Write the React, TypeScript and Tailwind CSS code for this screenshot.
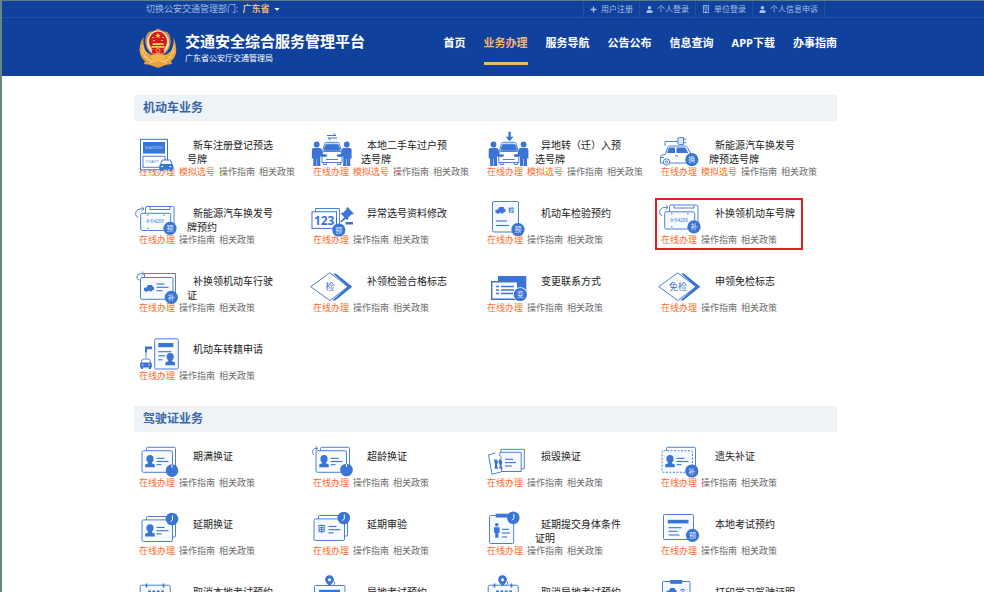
import type React from "react";
import { FaCaretDown, FaPlus, FaUser } from "react-icons/fa";
import { FaRegBuilding } from "react-icons/fa6";

const BLUE = "#3a74d4";
const LINE = "#4b80d8";
const PALE = "#f7fafe";

interface Service {
  name: string;
  icon: React.ReactNode;
  simulate?: boolean;
  highlight?: boolean;
}

interface Section {
  title: string;
  services: Service[];
}

function Icon({ children }: { children: React.ReactNode }) {
  return (
    <svg
      viewBox="0 0 48 36"
      className="relative h-9 w-12 shrink-0 overflow-visible"
      fill="none"
      stroke={LINE}
      strokeWidth="1"
      aria-hidden="true"
    >
      {children}
    </svg>
  );
}

function Label({
  x,
  y,
  size,
  color = BLUE,
  bold = true,
  children,
}: {
  x: number;
  y: number;
  size: number;
  color?: string;
  bold?: boolean;
  children: React.ReactNode;
}) {
  return (
    <text
      x={x}
      y={y + size * 0.37}
      fontSize={size}
      fontWeight={bold ? 700 : 400}
      fill={color}
      stroke="none"
      textAnchor="middle"
    >
      {children}
    </text>
  );
}

function Badge({ x, y, text }: { x: number; y: number; text: string }) {
  return (
    <g>
      <circle cx={x} cy={y} r="6.6" fill={BLUE} stroke="none" />
      <Label x={x} y={y} size={7} color="#e6effc" bold={false}>
        {text}
      </Label>
    </g>
  );
}

function Clock({ x, y, low }: { x: number; y: number; low?: boolean }) {
  return (
    <g>
      <circle cx={x} cy={y} r="6.3" fill={BLUE} stroke="none" />
      <path
        d={low ? `M${x} ${y - 6}v3` : `M${x + 0.5} ${y - 3.5}v4.5l-2 1.5`}
        stroke="#fff"
      />
    </g>
  );
}

function Person({ x, y }: { x: number; y: number }) {
  return (
    <g transform={`translate(${x} ${y})`} fill={BLUE} stroke="none">
      <ellipse cx="0" cy="-2.2" rx="3.6" ry="3.8" />
      <path d="M-2 0h4v2.2l2.8 1.200v2.800h-9.600v-2.800l2.800-1.200z" />
    </g>
  );
}

function Lines({ x, rows }: { x: number; rows: [number, number][] }) {
  return (
    <g stroke={BLUE} strokeWidth="1.1">
      {rows.map(([y, w]) => (
        <path key={y} d={`M${x} ${y}h${w}`} />
      ))}
    </g>
  );
}

function SmallCar({ x, y }: { x: number; y: number }) {
  return (
    <g transform={`translate(${x} ${y})`}>
      <path d="M1.200 5 2.400 1Q2.700 0 3.700 0h6.600q1 0 1.300 1l1.200 4z" fill="#fff" stroke={BLUE} />
      <path
        d="M0 6q0-2 2-2h10q2 0 2 2v3.500h-1.200V11h-2.400V9.500H3.600V11H1.200V9.500H0z"
        fill={BLUE}
        stroke="none"
      />
      <path d="M2 6.600h2M10 6.600h2" stroke="#fff" />
    </g>
  );
}

function SideCar({ x, y }: { x: number; y: number }) {
  return (
    <path
      transform={`translate(${x} ${y})`}
      d="M-5 0h2.2L-1-2.6h4.4V-1H5v3.2H3.4A1.6 1.6 0 0 1 .4 3H-1a1.7 1.7 0 0 1-3.2 0H-5z"
      fill={BLUE}
      stroke="none"
    />
  );
}

function FrontCar() {
  return (
    <g stroke={LINE}>
      <path d="m9.5 21.500 2.200-8q.4-1.200 1.600-1.200h11.400q1.200 0 1.600 1.200l2.200 8" fill="#fff" />
      <path d="m11 20.300 1.600-5.200q.3-.9 1.100-.9h10.600q.8 0 1.100.9l1.600 5.200z" fill={BLUE} />
      <path d="M9 23.500q0-2 2-2h16q2 0 2 2v9H9z" fill="#fff" />
      <path d="M10.500 24.500h4l-1 2.200h-3zM27.500 24.500h-4l1 2.200h3z" fill={BLUE} stroke="none" />
      <path d="M13 29.500h12M10.500 32.500v2h3v-2M24.500 32.500v2h3v-2" />
    </g>
  );
}

function Guard({ x, flip }: { x: number; flip?: boolean }) {
  return (
    <g
      transform={`translate(${x} 0)${flip ? " scale(-1 1)" : ""}`}
      fill={BLUE}
      stroke="none"
    >
      <circle cx="0" cy="14.5" r="2.9" />
      <path d="M-4.800 20q0-2 2-2h5.800q1.800 0 2.200 2l.6 4 2.600.8v2H4.200L3.600 26v10H.400V29h-.5v7h-3.300V28.500h-1.400z" />
    </g>
  );
}

function TransferIcon({ inbound }: { inbound?: boolean }) {
  return (
    <Icon>
      <g transform={inbound ? "translate(2.8 0)" : undefined}>
        <FrontCar />
        <Guard x={3.7} />
        <Guard x={33.8} flip />
        {inbound ? (
          <path d="M18.6 1.8h2.4v5h2.8l-4 4.400-4-4.400h2.8z" fill={BLUE} stroke="none" />
        ) : (
          <path d="M14 5.500h9l-2.500-2M24 8h-9l2.500 2" stroke={BLUE} />
        )}
      </g>
    </Icon>
  );
}

function PlateIcon({ badge, dx = 0, dy = 0 }: { badge: string; dx?: number; dy?: number }) {
  return (
    <Icon>
      <g transform={`translate(${dx} ${dy})`}>
        <rect x="6.5" y="8.5" width="28.5" height="20" rx="1.5" fill="#fff" />
        <path d="M11 8.5v3h20v-3" />
        <rect x="1.7" y="15.3" width="30" height="17.2" rx="1.5" fill={PALE} />
        <Label x={16} y={23.5} size={4.5} bold={false}>
          A•04288
        </Label>
        <path d="M8 17.2h1.5M24 17.2h1.5M8 30.4h1.5M24 30.4h1.5" />
        <path d="M5 10.8H2q-5 .6-5.500 5 0 2.600 2.800 3.600M2.600 8.600 5 10.800 2.600 13" />
        <Badge x={31} y={30.3} text={badge} />
      </g>
    </Icon>
  );
}

function DiamondIcon({ text }: { text: string }) {
  return (
    <Icon>
      <path d="M-2.3 20.7 16.8 6.8 35 20.7 16.8 34.5z" fill="#fff" />
      <path
        d="M20 7.5h2.800L39.300 20.700 22.200 34.500h-3L34.500 20.700z"
        fill={BLUE}
        stroke="none"
      />
      <Label x={17} y={20.4} size={9} bold={false}>
        {text}
      </Label>
    </Icon>
  );
}

function CardIcon({
  top = 6.3,
  dashed,
  arrow,
  x = 3,
  mark,
  children,
}: {
  top?: number;
  dashed?: boolean;
  arrow?: boolean;
  x?: number;
  mark?: string;
  children?: React.ReactNode;
}) {
  return (
    <Icon>
      <g transform={`translate(${x} ${top})`}>
        <rect x="4.5" y="0" width="29" height="20.5" rx="1" fill="#fff" />
        <rect
          x="0"
          y="3.4"
          width="30.5"
          height="21.6"
          rx="1.5"
          fill={PALE}
          strokeDasharray={dashed ? "2 1.5" : undefined}
        />
        {mark ? (
          <Label x={7.5} y={14} size={8}>
            {mark}
          </Label>
        ) : (
          <Person x={8} y={13.8} />
        )}
        <Lines x={14.5} rows={[[11, 8], [14.2, 12], [17.4, 5]]} />
        {arrow && <path d="M-2.400 7.500Q-5 3.500-1.500 1.400l3-.4M-.8-1.200 1.600 1-.4 3.400" />}
      </g>
      {children}
    </Icon>
  );
}

function Pin({ x }: { x: number }) {
  return (
    <g stroke="none">
      <path
        d={`M${x} 9.2q-4.4-4-4.4-6.6a4.4 4.4 0 0 1 8.8 0Q${x + 4.4} 5.2 ${x} 9.2z`}
        fill={BLUE}
      />
      <circle cx={x} cy="2.8" r="1.5" fill="#fff" />
      <path d={`M${x + 5} 4.5q1 2.2-1.6 4`} stroke={LINE} />
    </g>
  );
}

function CalendarIcon({ pin }: { pin?: boolean }) {
  return (
    <Icon>
      <rect x="1.2" y="8.2" width="30" height="25" rx="1.5" fill={PALE} />
      <path d="M7.5 6.5v4M24.5 6.5v4" stroke={BLUE} strokeWidth="1.6" />
      <path d="M9 14.8h16M9 20.8h16" stroke={BLUE} strokeWidth="2.6" strokeDasharray="2.8 1.6" />
      {pin && <Pin x={15.5} />}
    </Icon>
  );
}

const sections: Section[] = [
  {
    title: "机动车业务",
    services: [
      {
        name: "新车注册登记预选号牌",
        simulate: true,
        icon: (
          <Icon>
            <rect x="1.5" y="9.3" width="27" height="30.5" fill="#fff" stroke={BLUE} />
            <rect x="4" y="12" width="22" height="11.5" fill={BLUE} stroke="none" />
            <Label x={15} y={17.6} size={4} color="#bcd3f7" bold={false}>
              B·A00000
            </Label>
            <rect x="4" y="26.3" width="22" height="11" />
            <Label x={13} y={32} size={4} bold={false}>
              Y·0A77
            </Label>
            <SmallCar x={20.3} y={30} />
          </Icon>
        ),
      },
      { name: "本地二手车过户预选号牌", simulate: true, icon: <TransferIcon /> },
      { name: "异地转（迁）入预选号牌", simulate: true, icon: <TransferIcon inbound /> },
      {
        name: "新能源汽车换发号牌预选号牌",
        simulate: true,
        icon: (
          <Icon>
            <path d="M4 16v-4.5h12.5" />
            <path d="M16.8 9q0-1.5 1.5-1.5h4.2v7h-4.2q-1.5 0-1.5-1.5zM22.5 9.2h2.8M22.5 12.6h2.8" fill="#dbe7fa" />
            <path
              d="M-.6 33V27q.2-1.600 1.600-2l3.400-.6 2-6.600q.5-1.800 2.200-1.800h15.400q1.600 0 2.400 1.600L30 24v9z"
              fill="#fff"
            />
            <path d="m6 23 1.500-4.700q.3-.8 1.200-.8h5.300V23zM15.500 17.500h8q.9 0 1.300.8l2.400 4.700H15.500z" fill={BLUE} stroke="none" />
            <circle cx="5.500" cy="32" r="3.200" fill="#fff" />
            <circle cx="5.500" cy="32" r="1.200" />
            <path d="M-.6 27.500h3.500M14 26h3" />
            <Badge x={30.8} y={29.7} text="换" />
          </Icon>
        ),
      },
      { name: "新能源汽车换发号牌预约", icon: <PlateIcon badge="预" /> },
      {
        name: "异常选号资料修改",
        icon: (
          <Icon>
            <path d="M2.5 14v-3.5h24V27h-3" />
            <rect x="-1" y="13.8" width="24.5" height="16.6" fill="#fff" stroke={BLUE} />
            <Label x={11.2} y={22.3} size={12}>
              123
            </Label>
            <g fill={BLUE} stroke="none">
              <path d="m34.500 9 6.200 6.400-1.300 1.200-1-.2-3.300 3.300.2 1.200-1.300 1.200-6.200-6.400 1.300-1.200 1.100.2 3.200-3.200-.1-1.200z" />
              <path d="m32.200 18.500 1.500 1.400-5.400 4.600-1-1.100zM32.500 24h7.500v2.400h-7.500z" />
            </g>
            <Badge x={25.8} y={32} text="预" />
          </Icon>
        ),
      },
      {
        name: "机动车检验预约",
        icon: (
          <Icon>
            <rect x="5.5" y="3.5" width="26" height="30.5" rx="1.5" fill={PALE} />
            <SideCar x={13.5} y={11.7} />
            <Label x={24.3} y={11.7} size={6}>
              检
            </Label>
            <Lines x={9} rows={[[23, 11], [27.5, 13]]} />
            <Badge x={31} y={31.5} text="预" />
          </Icon>
        ),
      },
      {
        name: "补换领机动车号牌",
        highlight: true,
        icon: <PlateIcon badge="补" dx={2} dy={-1.5} />,
      },
      {
        name: "补换领机动车行驶证",
        icon: (
          <Icon>
            <path d="M5.5 11.5v-4h31V28" />
            <rect x="1.5" y="11.5" width="32.5" height="21.8" rx="1.5" fill={PALE} />
            <path d="M4.500 7.600H1.800Q-2 8-2.200 11q0 2.600 2.600 3.200M3 5.500l2 2.100-2 2.200" />
            <SideCar x={10} y={21.7} />
            <Lines x={17.5} rows={[[18, 8], [21.3, 12], [24.7, 6]]} />
            <Badge x={32.3} y={31.3} text="补" />
          </Icon>
        ),
      },
      { name: "补领检验合格标志", icon: <DiamondIcon text="检" /> },
      {
        name: "变更联系方式",
        icon: (
          <Icon>
            <rect x="11" y="10" width="28.3" height="22" rx="1" fill={BLUE} stroke="none" />
            <path d="M4.7 15.700h26v17.600h-26z" fill="#fff" stroke={BLUE} strokeWidth="1.4" />
            <path d="M9 20.500h3M9 24h3M9 27.500h3M14 20.500h13M14 24h13M14 27.500h13" stroke={BLUE} strokeWidth="1.4" />
            <circle cx="33.3" cy="28.5" r="7.3" fill="#fff" stroke="none" />
            <Badge x={33.3} y={28.5} text="变" />
          </Icon>
        ),
      },
      { name: "申领免检标志", icon: <DiamondIcon text="免检" /> },
      {
        name: "机动车转籍申请",
        icon: (
          <Icon>
            <rect x="15.7" y="4.8" width="23.6" height="30.2" rx="1.5" fill={PALE} />
            <rect x="19.3" y="9" width="15" height="4.2" fill={BLUE} stroke="none" />
            <Lines x={19.3} rows={[[17.7, 13], [21.8, 7], [25.8, 4]]} />
            <Person x={31.2} y={25} />
            <path d="M7 23.5v-10h6" />
            <path d="M6 12.500h7v2.800H8v3H6z" fill={BLUE} stroke="none" />
            <g transform="translate(1 25) scale(.85 .9)">
              <SmallCar x={0} y={0} />
            </g>
          </Icon>
        ),
      },
    ],
  },
  {
    title: "驾驶证业务",
    services: [
      { name: "期满换证", icon: <CardIcon><Clock x={33} y={29.6} low /></CardIcon> },
      { name: "超龄换证", icon: <CardIcon arrow><Clock x={33.5} y={29} low /></CardIcon> },
      {
        name: "损毁换证",
        icon: (
          <Icon>
            <path d="M14 11V8.3h23.3v19.5h-3" />
            <path d="M8.500 12 1.500 13.800 5 33.200l9-2.200" fill="#fff" />
            <path d="M13 11.300h21.200v19.200H14l1-3-2-2.500 1.800-3-2-2.600 1.600-3.200-2-2.400z" fill={PALE} />
            <path d="M7 18.500h3l1 3-1 2 1 4.300H7.600l.4-3.800zM12 18.500l2.500.5.8 3-1 2.200 1.200 3.500h-3.200l.6-3.500-1.400-2.600z" fill={BLUE} stroke="none" />
            <Lines x={18} rows={[[18.3, 8], [21.6, 11], [25, 7]]} />
          </Icon>
        ),
      },
      { name: "遗失补证", icon: <CardIcon x={1} dashed><Badge x={30.8} y={30} text="补" /></CardIcon> },
      { name: "延期换证", icon: <CardIcon top={7.5}><Clock x={33} y={10} /></CardIcon> },
      { name: "延期审验", icon: <CardIcon x={1} top={6.5} mark="审"><Clock x={30.8} y={9} /></CardIcon> },
      {
        name: "延期提交身体条件证明",
        icon: (
          <Icon>
            <rect x="2.5" y="6.5" width="24.2" height="28" rx="1" fill={PALE} />
            <rect x="8.7" y="4.7" width="12" height="3.8" fill={BLUE} stroke="none" />
            <g fill={BLUE} stroke="none">
              <circle cx="9.8" cy="15.8" r="1.8" />
              <path d="M7 18.300h5.600v5.500h-1.200v5h-3.200v-5H7z" />
            </g>
            <Lines x={15} rows={[[20.3, 7], [24, 8], [28, 5]]} />
            <Clock x={26.3} y={8.7} />
          </Icon>
        ),
      },
      {
        name: "本地考试预约",
        icon: (
          <Icon>
            <rect x="2.5" y="5.5" width="30" height="25" rx="1" fill={PALE} />
            <rect x="6.8" y="10.8" width="20.7" height="3.6" fill={BLUE} stroke="none" />
            <Lines x={7.5} rows={[[18.7, 13], [22.3, 9], [26, 11]]} />
            <Badge x={31.5} y={26.3} text="预" />
          </Icon>
        ),
      },
      { name: "取消本地考试预约", icon: <CalendarIcon /> },
      {
        name: "异地考试预约",
        icon: (
          <Icon>
            <rect x="1.5" y="8.5" width="30.5" height="25" rx="1" fill={PALE} />
            <rect x="6" y="12.8" width="21" height="4" fill={BLUE} stroke="none" />
            <Pin x={16.5} />
          </Icon>
        ),
      },
      { name: "取消异地考试预约", icon: <CalendarIcon pin /> },
      {
        name: "打印学习驾驶证明",
        icon: (
          <Icon>
            <rect x="1.5" y="4.5" width="27.5" height="30" rx="1" fill={PALE} />
            <rect x="9.2" y="3" width="12" height="3.8" fill={BLUE} stroke="none" />
            <SideCar x={10.5} y={13.7} />
            <Label x={21.5} y={14} size={5}>
              学
            </Label>
          </Icon>
        ),
      },
    ],
  },
];

const navItems = ["首页", "业务办理", "服务导航", "公告公布", "信息查询", "APP下载", "办事指南"];

const accountLinks = [
  { label: "用户注册", icon: <FaPlus className="size-[7px]" /> },
  { label: "个人登录", icon: <FaUser className="size-[7px]" /> },
  { label: "单位登录", icon: <FaRegBuilding className="size-2" /> },
  { label: "个人信息申诉", icon: <FaUser className="size-[7px]" /> },
];

function Emblem() {
  return (
    <svg viewBox="0 0 38 40" className="h-10 w-[38px] shrink-0" aria-hidden="true">
      <path
        d="M4.5 9C1 14 0 20 1 25q1 5 5 8l-1 3q6 .5 9 2l5 2 5-2q3-1.5 9-2l-1-3q4-3 5-8 1-6-2.5-16 1 9-3 15L19 31 7.5 24Q3.5 18 4.5 9z"
        fill="#e9a23b"
      />
      <path
        d="M3 17q1 6 5 9M2.5 22q2 6 7 8M5 28q3 4 8 5M35 17q-1 6-5 9M35.5 22q-2 6-7 8M33 28q-3 4-8 5M10 35l9-3 9 3"
        fill="none"
        stroke="#f8d888"
        strokeWidth="1"
      />
      <path d="M19 .5q4 3 9.5 3.5 4 5 3 12Q30 25 19 30 8 25 6.5 16q-1-7 3-12Q15 3.5 19 .5z" fill="#c98d52" />
      <path d="M11 27h16l-2 4.5-6 2-6-2z" fill="#f3b54a" />
      <ellipse cx="19" cy="14.5" rx="11" ry="12" fill="#f5e3b8" />
      <ellipse cx="19" cy="13.5" rx="9" ry="10" fill="#d8181c" />
      <path d="m19 5 .8 1.7 1.9.2-1.4 1.3.4 1.8-1.7-.9-1.7.9.4-1.8-1.4-1.3 1.9-.2z" fill="#ffd75e" />
      <path d="M13 9.5h1.8M23.2 9.5H25M14 12.5h1.8M22.2 12.5H24" stroke="#ffd75e" strokeWidth="1.2" />
      <path d="M14 15h10l1 2H13zM12.5 18h13v1.8h-13z" fill="#ffc94c" />
      <path d="M12.5 21.5h13l-1 4h-11z" fill="#d8181c" />
      <circle cx="19" cy="22.5" r="2" fill="none" stroke="#ffc94c" strokeWidth=".8" />
    </svg>
  );
}

function Header() {
  return (
    <header className="bg-[#10419c] text-white">
      <div className="border-b border-[#2050a6] pr-[15px]">
        <div className="mx-auto flex h-4 max-w-[703px] items-center justify-between px-3">
          <div className="flex items-center text-[9px] leading-4 text-[#9fb7e2]">
            <span>切换公安交通管理部门:</span>
            <button type="button" className="ml-1 flex items-center gap-1 font-bold text-[#f2b871]">
              广东省
              <FaCaretDown className="size-2 text-white" />
            </button>
          </div>
          <ul className="flex border-l border-[#2050a6] text-[8px] leading-4 text-[#a9bee6]">
            {accountLinks.map((link) => (
              <li key={link.label} className="border-r border-[#2050a6]">
                <a href="#" className="flex items-center gap-1 px-1.5">
                  {link.icon}
                  {link.label}
                </a>
              </li>
            ))}
          </ul>
        </div>
      </div>

      <div className="pr-[15px]">
        <div className="mx-auto flex h-[58px] max-w-[703px] items-start justify-between pl-[5px]">
          <div className="flex gap-2 pt-[10px]">
            <Emblem />
            <div className="pt-[3px]">
              <h1 className="text-[15px] leading-5 font-bold">交通安全综合服务管理平台</h1>
              <p className="text-[8px] leading-[14px]">广东省公安厅交通管理局</p>
            </div>
          </div>
          <nav className="flex gap-[18px] pt-[3px]">
            {navItems.map((item) => (
              <a
                key={item}
                href="#"
                className={`h-11 text-[11px] leading-[44px] font-bold ${
                  item === "业务办理" ? "border-b-[3px] border-[#f0b673] text-[#f0b673]" : ""
                }`}
              >
                {item}
              </a>
            ))}
          </nav>
        </div>
      </div>
    </header>
  );
}

function ServiceItem({ service }: { service: Service }) {
  return (
    <li className="relative">
      <div className="flex">
        {service.icon}
        <h3 className="w-[90px] pt-2 indent-1.5 text-[10px] leading-[14px] text-[#222]">
          {service.name}
        </h3>
      </div>
      <div className="flex gap-1 text-[9px] leading-3 whitespace-nowrap text-[#6d6d6d]">
        <a href="#" className="text-[#ff6a2b]">
          在线办理
        </a>
        {service.simulate && (
          <a href="#" className="text-[#ff6a2b]">
            模拟选号
          </a>
        )}
        <a href="#">操作指南</a>
        <a href="#">相关政策</a>
      </div>
      {service.highlight && (
        <span className="pointer-events-none absolute top-0 -left-1.5 h-[52px] w-[148px] border-2 border-[#e02020]" />
      )}
    </li>
  );
}

export default function App() {
  return (
    <div className="min-h-screen border-t border-l-2 border-t-[#5c7f86] border-l-[#6c8484] bg-white font-['Open_Sans','Noto_Sans_CJK_SC',sans-serif]">
      <Header />
      <main className="pt-[19px] pr-[15px]">
        <div className="mx-auto max-w-[703px]">
          {sections.map((section) => (
            <section key={section.title} className="mb-6">
              <h2 className="bg-[#eef3f8] pl-[9px] text-[12px] leading-[26px] font-bold text-[#3a66a8]">
                {section.title}
              </h2>
              <ul className="grid grid-cols-4 gap-y-5 pt-[9px] pr-0.5 pl-[5px]">
                {section.services.map((service) => (
                  <ServiceItem key={service.name} service={service} />
                ))}
              </ul>
            </section>
          ))}
        </div>
      </main>
    </div>
  );
}
